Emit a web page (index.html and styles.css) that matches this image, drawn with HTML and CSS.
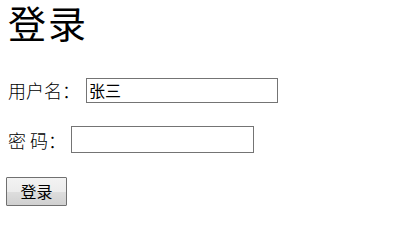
FILE: index.html
```html
<!DOCTYPE html>
<html lang="zh-CN">
<head>
<meta charset="utf-8">
<title>登录</title>
<link rel="stylesheet" href="styles.css">
</head>
<body>
<div class="page">
  <h1 class="title">登录</h1>
  <form class="form">
    <div class="row row-user">
      <label class="label" for="u">用户名：</label>
      <input class="field field-user" id="u" type="text" value="张三">
    </div>
    <div class="row row-pass">
      <label class="label" for="p">密 码：</label>
      <input class="field field-pass" id="p" type="password">
    </div>
    <div class="row row-btn">
      <button class="btn" type="button">登录</button>
    </div>
  </form>
</div>
</body>
</html>
```

FILE: styles.css
```css
html, body {
  margin: 0;
  padding: 0;
  background: #ffffff;
}
.page {
  display: flex;
  flex-direction: column;
  padding: 0 8px;
  font-family: "Noto Sans CJK SC", "Noto Sans", sans-serif;
  color: #000;
}
.title {
  margin: 0;
  font-family: "Liberation Serif", "Noto Sans CJK SC", serif;
  font-size: 38px;
  line-height: 50px;
  font-weight: 400;
  letter-spacing: 2px;
}
.form {
  display: flex;
  flex-direction: column;
  margin: 0;
}
.row {
  display: flex;
  align-items: center;
  gap: 5px;
}
.row-user {
  margin-top: 27px;
  height: 26px;
  gap: 6px;
}
.row-pass {
  margin-top: 23px;
  height: 27px;
}
.row-btn {
  margin-top: 24px;
  margin-left: -2px;
}
.label {
  font-size: 18px;
  line-height: 26px;
  font-weight: 300;
}
.field {
  box-sizing: border-box;
  margin: 0;
  border: 1px solid #747474;
  padding: 0 2px;
  font-family: "Noto Sans CJK SC", "Noto Sans", sans-serif;
  font-size: 16px;
  background: #fff;
  outline: none;
}
.field-user {
  width: 192px;
  height: 25px;
  line-height: 23px;
}
.field-pass {
  width: 183px;
  height: 27px;
}
.btn {
  box-sizing: border-box;
  width: 61px;
  height: 29px;
  margin: 0;
  padding: 0;
  border: 1px solid #707070;
  border-radius: 1px;
  background: linear-gradient(#f3f3f3, #ececec 50%, #dedede 50%, #d0d0d0);
  font-family: "Noto Sans CJK SC", "Noto Sans", sans-serif;
  font-size: 16px;
  line-height: 27px;
  color: #000;
}
```
